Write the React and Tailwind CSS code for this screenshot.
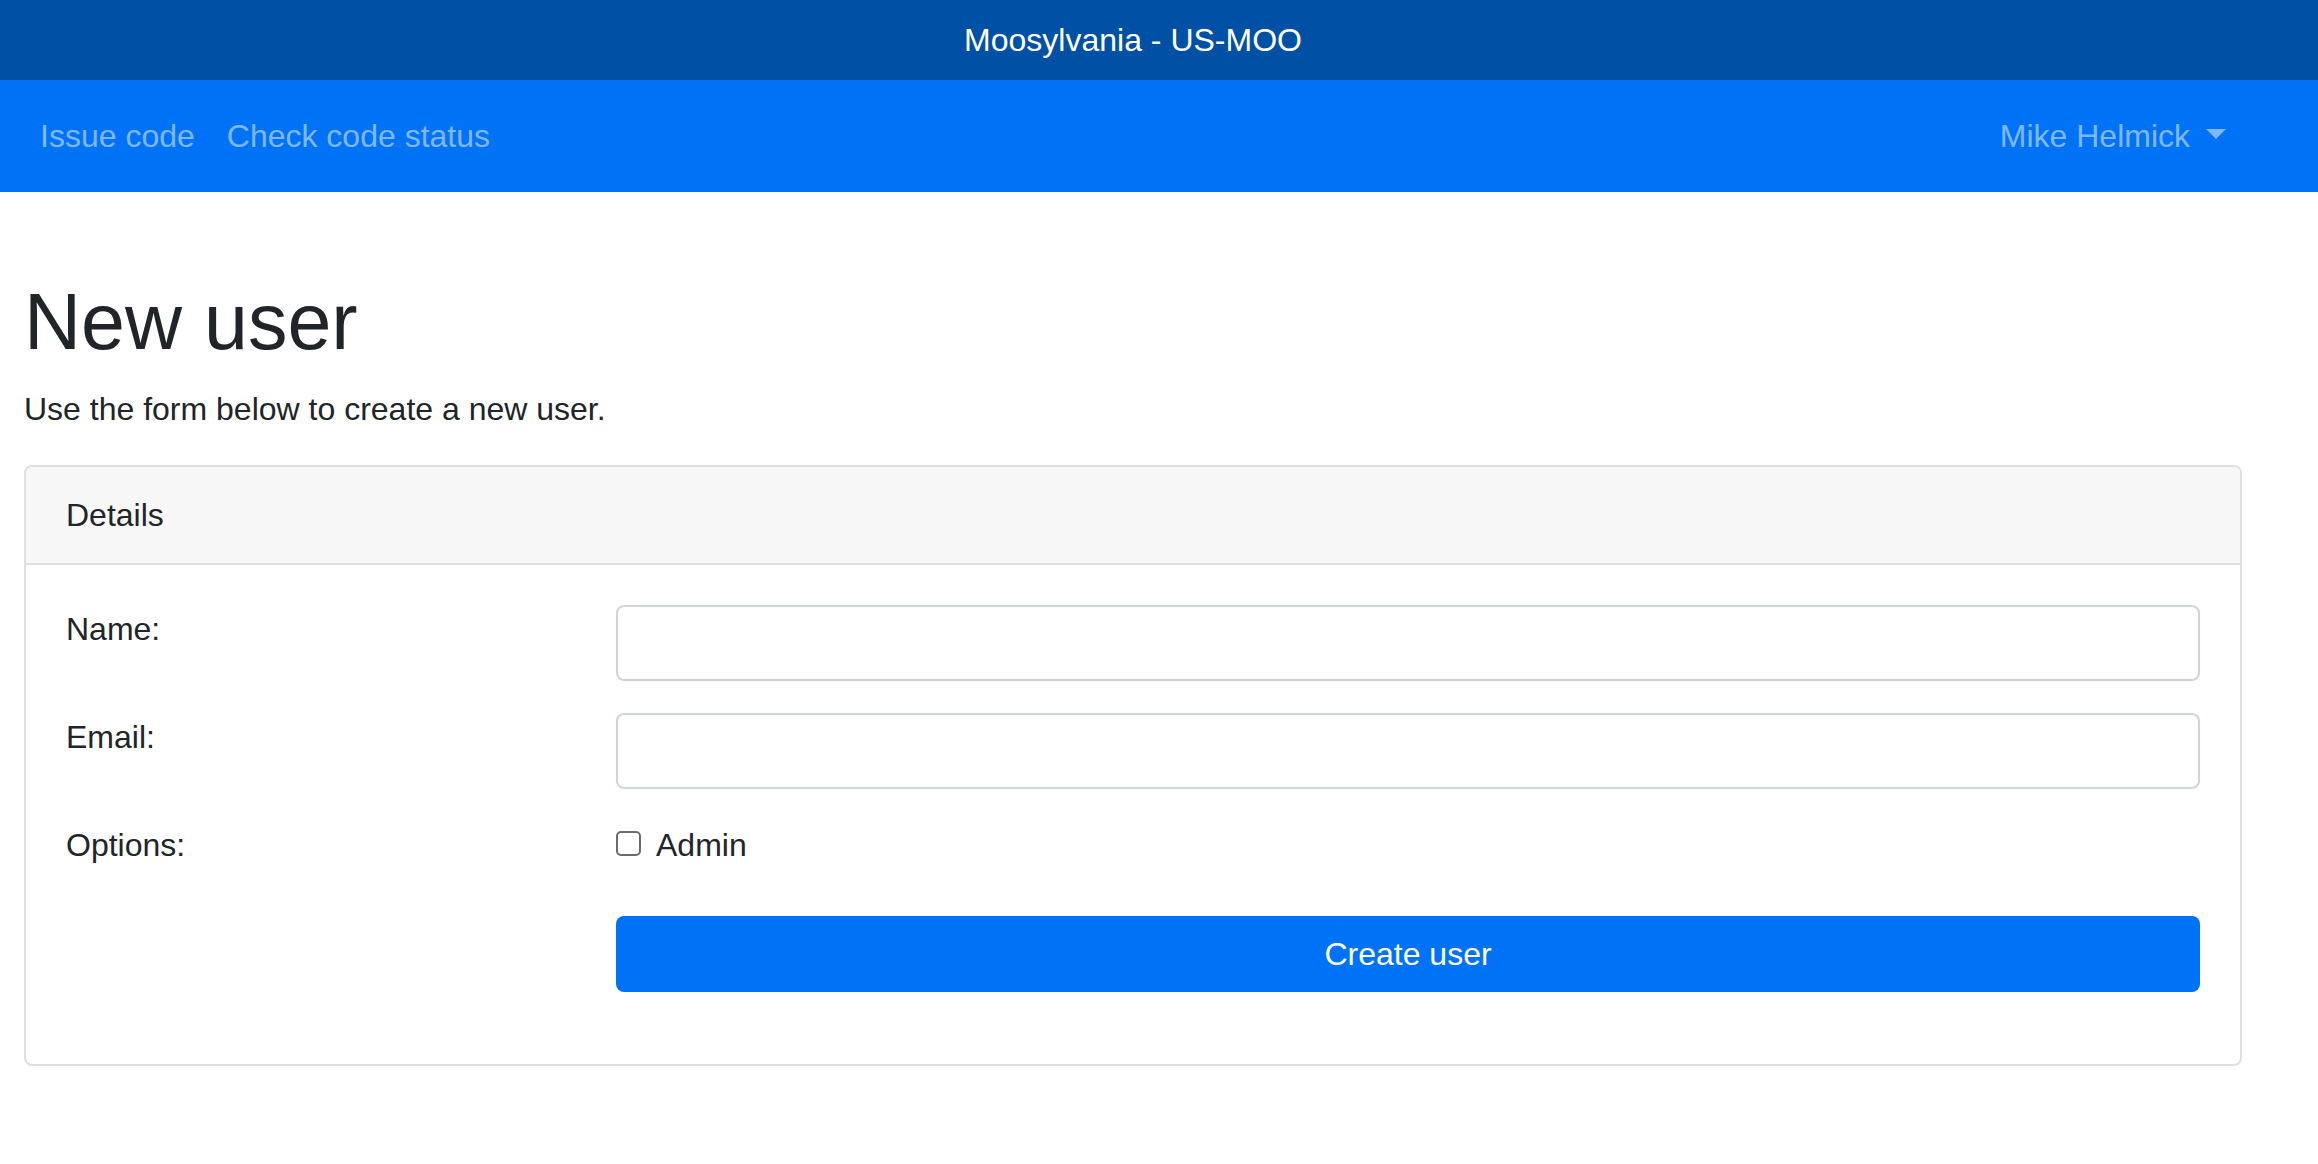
import { useState } from 'react';

const NavLink = ({ children }) => (
    <a href="#" className="px-[16px] text-white/50 hover:text-white/75">
        {children}
    </a>
);

const FormRow = ({ label, children, className = 'mb-[32px]' }) => (
    <div className={`flex ${className}`}>
        <div className="w-[550px] shrink-0">{label}</div>
        <div className="flex-1">{children}</div>
    </div>
);

const App = () => {
    const [name, setName] = useState('');
    const [email, setEmail] = useState('');
    const [isAdmin, setIsAdmin] = useState(false);

    return (
        <div className="min-h-screen bg-white font-['Liberation_Sans',Arial,sans-serif] text-[32px] leading-[48px] text-[#212529]">
            {/* Site banner */}
            <div className="h-[80px] bg-[#0050a5] flex items-center justify-center pr-[52px] text-white">
                Moosylvania - US-MOO
            </div>

            {/* Navbar */}
            <nav className="h-[112px] bg-[#0072f5] flex items-center pl-[24px] pr-[76px]">
                <NavLink>Issue code</NavLink>
                <NavLink>Check code status</NavLink>
                <div className="ml-auto">
                    <a href="#" className="px-[16px] text-white/50 hover:text-white/75">
                        Mike Helmick
                        <span className="inline-block w-0 h-0 ml-[16px] align-[8px] border-t-[10px] border-x-[10px] border-x-transparent border-t-current" />
                    </a>
                </div>
            </nav>

            <main className="pl-[24px] pr-[76px]">
                <h1 className="mt-[82px] mb-[16px] text-[79px] leading-[95px] font-medium">New user</h1>
                <p className="mb-[32px]">Use the form below to create a new user.</p>

                <div className="border-2 border-[#dfdfdf] rounded-[8px] overflow-hidden">
                    <div className="bg-[#f7f7f7] px-[40px] py-[24px] border-b-2 border-[#dfdfdf]">
                        Details
                    </div>
                    <div className="p-[40px]">
                        <FormRow label="Name:">
                            <input
                                type="text"
                                value={name}
                                onChange={(e) => setName(e.target.value)}
                                className="w-full h-[76px] border-2 border-[#ced4da] rounded-[8px] px-[24px] outline-none"
                            />
                        </FormRow>
                        <FormRow label="Email:">
                            <input
                                type="email"
                                value={email}
                                onChange={(e) => setEmail(e.target.value)}
                                className="w-full h-[76px] border-2 border-[#ced4da] rounded-[8px] px-[24px] outline-none"
                            />
                        </FormRow>
                        <FormRow label="Options:" className="mb-[47px]">
                            <label className="flex items-start cursor-pointer" onClick={() => setIsAdmin(!isAdmin)}>
                                <span
                                    className={`mt-[10px] w-[25px] h-[25px] border-2 rounded-[5px] shrink-0 ${isAdmin ? 'bg-[#0072f5] border-[#0072f5]' : 'bg-white border-[#6b6b6b]'}`}
                                />
                                <span className="ml-[15px]">Admin</span>
                            </label>
                        </FormRow>
                        <FormRow label="" className="mb-[32px]">
                            <button className="w-full h-[76px] bg-[#0072f5] hover:bg-[#0062d6] text-white rounded-[8px] transition-colors">
                                Create user
                            </button>
                        </FormRow>
                    </div>
                </div>
            </main>
        </div>
    );
};

export default App;
